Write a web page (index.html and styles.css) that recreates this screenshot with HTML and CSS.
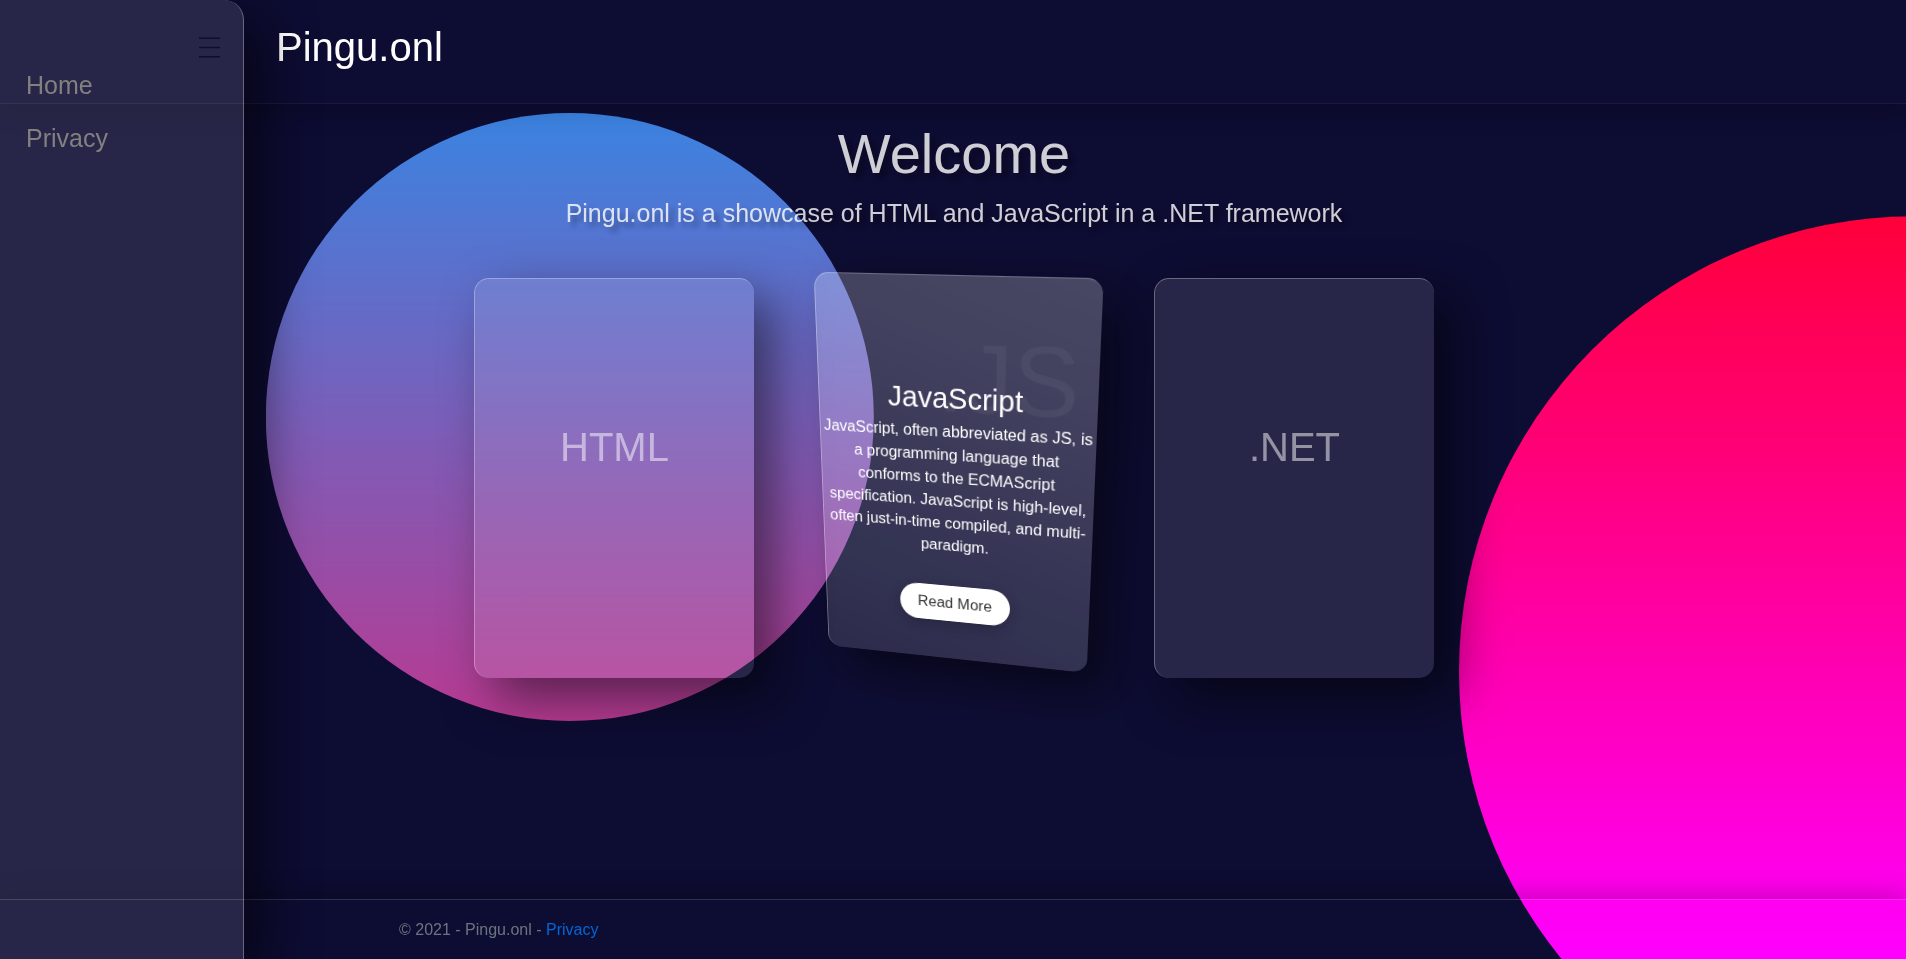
FILE: index.html
```html
<!DOCTYPE html>
<html lang="en">
<head>
<meta charset="utf-8">
<meta name="viewport" content="width=device-width, initial-scale=1">
<title>Home - Pingu.onl</title>
<link rel="stylesheet" href="styles.css">
</head>
<body>
<div class="orb orb-blue"></div>
<div class="orb orb-red"></div>
<div class="page">
  <header class="header"><a class="brand" href="#">Pingu.onl</a></header>
  <main class="main">
    <h1 class="title">Welcome</h1>
    <p class="lead">Pingu.onl is a showcase of HTML and JavaScript in a .NET framework</p>
    <div class="cards">
      <section class="card"><h2 class="card-name">HTML</h2></section>
      <section class="card card-tilted">
        <span class="card-mark">.JS</span>
        <div class="card-content">
          <h2 class="card-title">JavaScript</h2>
          <p class="card-text">JavaScript, often abbreviated as JS, is a programming language that conforms to the ECMAScript specification. JavaScript is high-level, often just-in-time compiled, and multi-paradigm.</p>
          <a class="card-button" href="#">Read More</a>
        </div>
      </section>
      <section class="card"><h2 class="card-name">.NET</h2></section>
    </div>
  </main>
  <footer class="footer">
    <div class="footer-inner">© 2021 - Pingu.onl - <a class="footer-link" href="#">Privacy</a></div>
  </footer>
</div>
<aside class="sidebar">
  <button class="menu-button" type="button" aria-label="Toggle menu">
    <svg width="21" height="22" viewBox="0 0 21 22" aria-hidden="true"><path d="M0 2.2h21M0 11.5h21M0 20.8h21" stroke="#0d0c32" stroke-width="1.6"/></svg>
  </button>
  <nav class="nav">
    <a class="nav-link" href="#">Home</a>
    <a class="nav-link" href="#">Privacy</a>
  </nav>
</aside>
</body>
</html>
```

FILE: styles.css
```css
* {
  box-sizing: border-box;
}

body {
  margin: 0;
  overflow: hidden;
  background: #0d0c32;
  color: #fff;
  font-family: "Liberation Sans", Arial, sans-serif;
  font-size: 16px;
  line-height: 24px;
}

h1,
h2,
p {
  margin: 0;
  font-weight: 400;
}

a {
  text-decoration: none;
}

.orb {
  position: fixed;
  inset: 0;
}

.orb-blue {
  background: linear-gradient(#2491f0, #e91e73);
  clip-path: circle(304px at calc(30% - 2px) 417px);
}

.orb-red {
  background: linear-gradient(#f00, #f0f);
  clip-path: circle(455px at calc(100% + 8px) 70%);
}

.page {
  position: relative;
  display: flex;
  flex-direction: column;
  min-height: 100vh;
}

.header {
  height: 104px;
  padding: 16px 276px;
  border-bottom: 1px solid rgba(255, 255, 255, 0.06);
  box-shadow: 0 5px 25px rgba(0, 0, 0, 0.2);
}

.brand {
  color: #fff;
  font-size: 40px;
  line-height: 62px;
}

.main {
  flex: 1;
  padding-left: 2px;
  text-align: center;
}

.title {
  padding-top: 16px;
  color: rgba(255, 255, 255, 0.8);
  font-size: 56px;
  line-height: 68px;
  text-shadow: 5px 5px 5px rgba(0, 0, 0, 0.3);
}

.lead {
  padding-top: 8px;
  color: rgba(255, 255, 255, 0.8);
  font-size: 25px;
  line-height: 34px;
  text-shadow: 5px 5px 5px rgba(0, 0, 0, 0.3);
}

.cards {
  display: flex;
  justify-content: center;
  gap: 60px;
  padding-top: 48px;
}

.card {
  position: relative;
  display: flex;
  align-items: center;
  justify-content: center;
  width: 280px;
  height: 400px;
  border-top: 1px solid rgba(255, 255, 255, 0.3);
  border-left: 1px solid rgba(255, 255, 255, 0.3);
  border-radius: 15px;
  background: rgba(255, 255, 255, 0.11);
  box-shadow: 20px 20px 50px rgba(0, 0, 0, 0.5);
}

.card-name {
  padding-bottom: 64px;
  color: rgba(255, 255, 255, 0.5);
  font-size: 40px;
  line-height: 48px;
}

.card-tilted {
  background:
    linear-gradient(200deg, rgba(255, 255, 255, 0.15), rgba(255, 255, 255, 0.02)),
    rgba(255, 255, 255, 0.11);
  transform: perspective(1000px) rotateX(-17deg) rotateY(-13deg);
}

.card-mark {
  position: absolute;
  top: 44px;
  right: 18px;
  color: rgba(255, 255, 255, 0.05);
  font-size: 96px;
  line-height: 108px;
}

.card-content {
  padding: 56px 2px 0;
}

.card-title {
  font-size: 29px;
  line-height: 36px;
}

.card-text {
  padding-top: 4px;
}

.card-button {
  display: inline-block;
  margin-top: 32px;
  padding: 8px 19px;
  border-radius: 20px;
  background: #fff;
  box-shadow: 0 5px 15px rgba(0, 0, 0, 0.2);
  color: #333;
}

.footer {
  height: 60px;
  border-top: 1px solid rgba(255, 255, 255, 0.15);
  box-shadow: 0 -5px 25px rgba(0, 0, 0, 0.2);
  color: #6c757d;
}

.footer-inner {
  max-width: 1140px;
  margin: 0 auto;
  padding: 0 16px;
  line-height: 60px;
}

.footer-link {
  color: #0366d6;
}

.sidebar {
  position: fixed;
  top: 0;
  bottom: 0;
  left: 0;
  display: flex;
  flex-direction: column;
  width: 244px;
  padding: 36px 0 0;
  border-right: 1px solid rgba(255, 255, 255, 0.3);
  border-top-right-radius: 20px;
  background: rgba(255, 255, 255, 0.11);
  box-shadow: 20px 20px 50px rgba(0, 0, 0, 0.5);
}

.menu-button {
  align-self: flex-end;
  height: 22px;
  margin-right: 23px;
  padding: 0;
  border: 0;
  background: none;
  line-height: 0;
}

.nav {
  display: flex;
  flex-direction: column;
  gap: 17px;
  padding: 9px 26px;
}

.nav-link {
  color: #818181;
  font-size: 25px;
  line-height: 36px;
}
```
